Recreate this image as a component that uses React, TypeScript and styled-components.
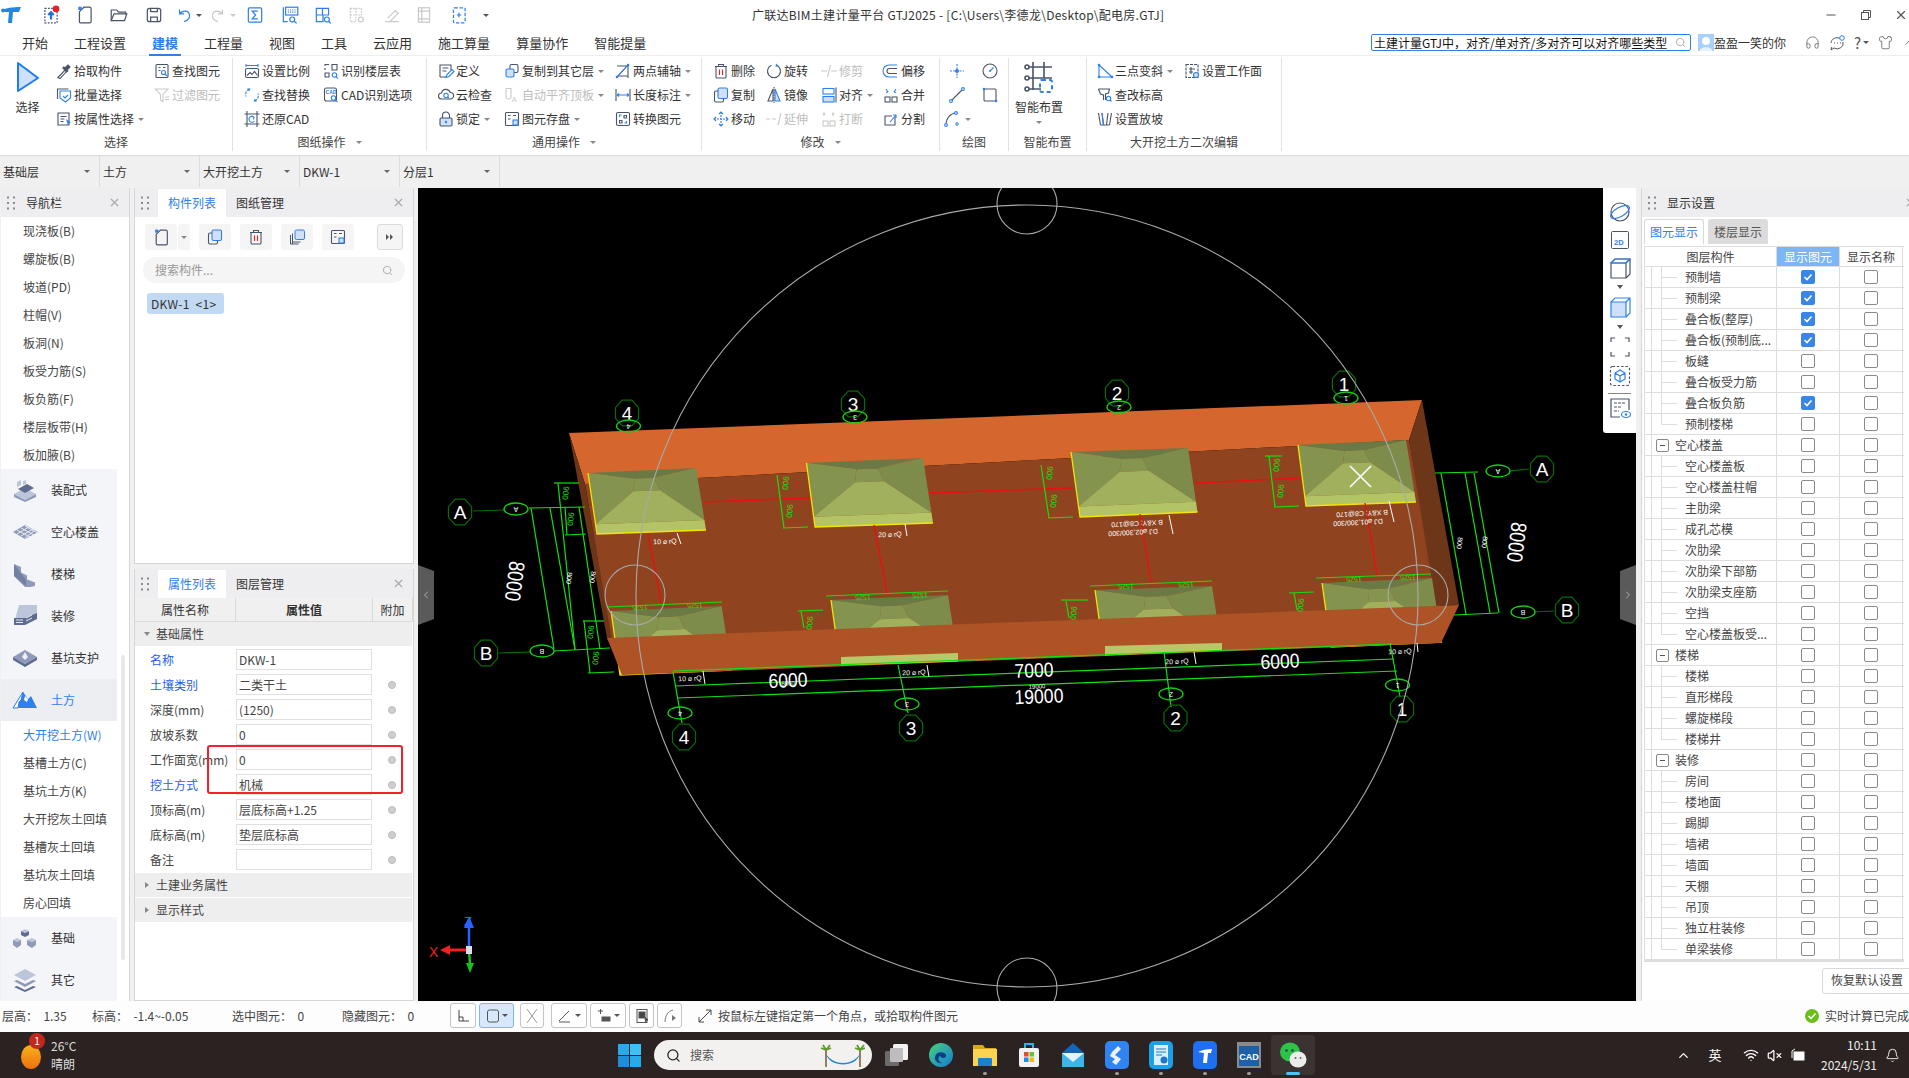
import React from 'react';
import styled, { createGlobalStyle } from 'styled-components';
import { X, Search, Headphones, Shirt, ChevronUp, ChevronLeft, ChevronRight, Wifi, VolumeX, Bell, Minus } from 'lucide-react';

const S = '#4a5468';
const B = '#2f80ed';
const D = '#c9c9c9';
const L = '#cfe1fa';

const Global = createGlobalStyle`
  html, body { margin: 0; padding: 0; background: #f0f0f0; overflow: hidden; }
  * { box-sizing: border-box; }
  body { font-family: "Noto Sans CJK SC", "Open Sans", sans-serif; font-size: 12px; color: #333; }
`;

const Shell = styled.div`
  width: 1909px; height: 1078px; display: flex; flex-direction: column; overflow: hidden; background: #f0f0f0;
`;
const TitleBar = styled.div`
  height: 30px; flex: none; display: flex; align-items: center; background: #fff;
`;
const Qat = styled.div`
  width: 752px; display: flex; align-items: center; flex: none;
`;
const QatCell = styled.span<{ $w: number; $pl?: number }>`
  width: ${p => p.$w}px; padding-left: ${p => p.$pl ?? 0}px; display: inline-flex; align-items: center; justify-content: center; flex: none;
`;
const TitleText = styled.div`
  font-size: 12px; line-height: 16px; color: #333; white-space: nowrap; letter-spacing: 0.28px;
`;
const WinControls = styled.div`
  margin-left: auto; display: flex; align-items: center; gap: 21px; padding-right: 1px;
`;
const TabBar = styled.div`
  height: 26px; flex: none; display: flex; align-items: stretch; background: #fff; padding-left: 22px; gap: 26px; border-bottom: 1px solid #eee;
`;
const MenuTab = styled.div<{ $active?: boolean }>`
  font-size: 13px; line-height: 24px; white-space: nowrap; position: relative; margin-top: 1px;
  color: ${p => (p.$active ? B : '#333')}; font-weight: ${p => (p.$active ? 700 : 400)};
  ${p => p.$active && `&::after { content: ''; position: absolute; left: -3px; right: -3px; bottom: -1px; height: 2px; background: ${B}; }`}
`;
const TabRight = styled.div`
  margin-left: auto; display: flex; align-items: center; height: 25px; width: 538px;
`;
const HelpSearch = styled.div`
  width: 320px; flex: none; height: 17px; border: 1px solid ${B}; border-radius: 2px; display: flex; align-items: center; justify-content: space-between; padding: 0 4px 0 2px;
  font-size: 12px; line-height: 15px; color: #111; white-space: nowrap; overflow: hidden;
`;
const UserName = styled.span`
  font-size: 12px; color: #333; white-space: nowrap; line-height: 16px; margin-right: 19px; flex: none;
`;
const HelpIcons = styled.div`
  display: flex; align-items: center; gap: 9px; flex: none;
`;
const QMark = styled.span`
  display: inline-flex; align-items: center; font-size: 15px; line-height: 16px; color: #555;
`;
const Ribbon = styled.div`
  height: 100px; flex: none; display: flex; background: #fff; padding: 2px 0 4px; border-bottom: 1px solid #dcdcdc;
`;
const RGroup = styled.div<{ $w: number; $noBorder?: boolean }>`
  width: ${p => p.$w}px; flex: none; display: flex; flex-direction: column; ${p => !p.$noBorder && 'border-right: 1px solid #e2e2e2;'}
`;
const RBody = styled.div<{ $pl?: number }>`
  height: 77px; padding-top: 1px; padding-left: ${p => p.$pl ?? 0}px; display: flex;
`;
const RLabel = styled.div`
  height: 18px; font-size: 12px; line-height: 18px; text-align: center; color: #444; display: flex; justify-content: center; align-items: center; gap: 6px;
`;
const RCol = styled.div<{ $w: number }>`
  width: ${p => p.$w}px; flex: none; display: flex; flex-direction: column;
`;
const RItem = styled.div<{ $off?: boolean; $center?: boolean }>`
  height: 24px; display: flex; align-items: center; white-space: nowrap; line-height: 16px; font-size: 12px;
  color: ${p => (p.$off ? '#bdbdbd' : '#333')}; ${p => p.$center && 'justify-content: center;'}
`;
const RText = styled.span`
  margin-left: 1px;
`;
const Caret = styled.span`
  display: inline-block; width: 0; height: 0; border-left: 3px solid transparent; border-right: 3px solid transparent; border-top: 3px solid #888; margin-left: 4px; flex: none;
`;
const Large = styled.div`
  display: flex; flex-direction: column; align-items: center; font-size: 12px; line-height: 16px; color: #333;
`;
const LargeIconBox = styled.div<{ $h: number }>`
  height: ${p => p.$h}px; display: flex; align-items: center; justify-content: center;
`;
const LargeText = styled.span`
  margin-top: 4px;
`;
const SelectBar = styled.div`
  height: 31px; flex: none; display: flex; background: #f0f0f0;
`;
const SelectBox = styled.div`
  width: 100px; border-right: 1px solid #dcdcdc; display: flex; align-items: center; justify-content: space-between; padding: 0 9px 0 3px; font-size: 12px; line-height: 16px; color: #333;
`;
const Main = styled.div`
  height: 814px; flex: none; display: flex; padding-top: 1px; background: #f0f0f0;
`;
const NavPanel = styled.div`
  width: 129px; margin-left: 1px; flex: none; background: #fff; border-right: 1px solid #d6d6d6; position: relative; display: flex; flex-direction: column;
`;
const PanelHead = styled.div`
  height: 29px; flex: none; display: flex; align-items: stretch; background: #eeeef0; font-size: 12px; line-height: 16px; color: #333;
`;
const Grip = styled.div<{ $w: number }>`
  width: ${p => p.$w}px; flex: none; display: flex; align-items: center; padding-left: 6px;
`;
const HeadTitle = styled.div`
  display: flex; align-items: center; white-space: nowrap;
`;
const HeadTab = styled.div<{ $active?: boolean }>`
  width: 68px; margin-top: 1px; display: flex; align-items: center; justify-content: center;
  background: ${p => (p.$active ? '#fff' : 'transparent')}; color: ${p => (p.$active ? B : '#333')};
`;
const HeadClose = styled.div<{ $edge?: boolean }>`
  margin-left: auto; display: flex; align-items: center; padding-right: ${p => (p.$edge ? 0 : 8)}px; color: #a8a8a8; ${p => p.$edge && 'margin-right: -6px;'}
`;
const NavItem = styled.div<{ $active?: boolean }>`
  height: 28px; flex: none; padding-left: 22px; display: flex; align-items: center; font-size: 12px; line-height: 16px; white-space: nowrap; color: ${p => (p.$active ? B : '#444')};
`;
const NavCat = styled.div<{ $active?: boolean }>`
  height: 42px; flex: none; width: 116px; padding-left: 11px; display: flex; align-items: center; gap: 13px; font-size: 12px; line-height: 16px;
  background: ${p => (p.$active ? '#eceef2' : '#f4f5f8')}; color: ${p => (p.$active ? B : '#333')};
`;
const NavScroll = styled.div`
  position: absolute; left: 120px; top: 467px; width: 4px; height: 305px; background: #e8e8e8; border-radius: 2px;
`;
const MidCol = styled.div`
  width: 280px; margin-left: 4px; flex: none; display: flex; flex-direction: column; gap: 5px;
`;
const Panel = styled.div<{ $h?: number }>`
  ${p => (p.$h ? `height: ${p.$h}px;` : 'flex: 1;')} flex-shrink: 0; background: #fff; border: 1px solid #d6d6d6; border-top: none; position: relative; display: flex; flex-direction: column;
`;
const ToolRow = styled.div`
  display: flex; padding: 7px 0 0 10px; height: 33px;
`;
const ToolBtn = styled.div<{ $w?: number; $ml?: number; $border?: boolean }>`
  width: ${p => p.$w ?? 32}px; height: 26px; margin-left: ${p => p.$ml ?? 0}px; background: #f5f5f5; border-radius: 3px; display: flex; align-items: center; justify-content: center;
  ${p => p.$border && 'border: 1px solid #dcdcdc; background: #f5f5f5;'}
`;
const CompSearch = styled.div`
  margin: 7px 8px 0 8px; height: 26px; border-radius: 13px; background: #f5f5f5; display: flex; align-items: center; justify-content: space-between; padding: 0 12px; color: #999; font-size: 12px; line-height: 16px;
`;
const CompItem = styled.div`
  margin: 10px 0 0 12px; width: 77px; height: 21px; background: #c1d9f2; border-radius: 3px; font-size: 12px; line-height: 21px; padding-left: 4px; color: #333; white-space: pre; letter-spacing: 0.3px;
`;
const PropGrid = styled.div<{ $head?: boolean }>`
  display: grid; grid-template-columns: 101px 137px 1fr; ${p => p.$head && 'height: 24px; background: #f0f0f0; border-bottom: 1px solid #dcdcdc;'}
`;
const PropHeadCell = styled.div<{ $bold?: boolean }>`
  display: flex; align-items: center; justify-content: center; border-right: 1px solid #d8d8d8; font-size: 12px; line-height: 16px; font-weight: ${p => (p.$bold ? 700 : 400)};
`;
const PropGroup = styled.div<{ $mt?: number }>`
  height: 24px; margin-top: ${p => p.$mt ?? 0}px; margin-bottom: 1px; margin-right: 1px; background: #eeeeee; display: flex; align-items: center; padding-left: 9px; gap: 6px; font-size: 12px; line-height: 16px; color: #444;
`;
const Tri = styled.span<{ $open?: boolean }>`
  width: 0; height: 0; flex: none; display: inline-block;
  ${p => (p.$open
    ? 'border-left: 3px solid transparent; border-right: 3px solid transparent; border-top: 4px solid #888;'
    : 'border-top: 3px solid transparent; border-bottom: 3px solid transparent; border-left: 4px solid #888; margin-left: 1px; margin-right: 1px;')}
`;
const PropRow = styled.div`
  height: 25px; display: grid; grid-template-columns: 101px 136px 1fr; align-items: center;
`;
const PropName = styled.div<{ $link?: boolean }>`
  padding-left: 15px; font-size: 12px; line-height: 16px; white-space: nowrap; color: ${p => (p.$link ? '#1f5fe8' : '#444')};
`;
const PropInput = styled.div`
  height: 21px; border: 1px solid #e0e0e0; padding-left: 2px; font-size: 12px; line-height: 19px; color: #444; white-space: nowrap;
`;
const PropDot = styled.span`
  justify-self: center; width: 8px; height: 8px; border-radius: 50%; background: #cfcfcf; border: 1px solid #bbb; margin-right: 1px;
`;
const Annotation = styled.div`
  position: absolute; left: 72px; top: 176px; width: 196px; height: 49px; border: 2px solid #f0232a; border-radius: 3px; pointer-events: none;
`;
const CanvasWrap = styled.div`
  width: 1218px; margin-left: 4px; flex: none; background: #000; position: relative; overflow: hidden;
`;
const CanvasSvg = styled.svg`
  display: block; width: 1218px; height: 813px;
`;
const SideHandle = styled.div<{ $side: 'l' | 'r' }>`
  position: absolute; top: 377px; height: 60px; width: 16px; background: #5a5a5a; color: #aaa; display: flex; align-items: center; justify-content: center;
  ${p => (p.$side === 'l'
    ? 'left: 0; clip-path: polygon(0 0, 100% 10%, 100% 90%, 0 100%);'
    : 'right: 0; clip-path: polygon(0 10%, 100% 0, 100% 100%, 0 90%);')}
`;
const ViewBar = styled.div`
  position: absolute; right: 0; top: 0; width: 33px; height: 245px; padding-top: 10px; background: #fff; border-radius: 0 0 0 3px; display: flex; flex-direction: column; align-items: center;
`;
const ViewIcon = styled.div<{ $h: number }>`
  height: ${p => p.$h}px; flex: none; display: flex; align-items: center; justify-content: center;
`;
const ViewRule = styled.div`
  width: 23px; height: 1px; background: #888; margin: 3px 0 1px; flex: none;
`;
const RightPanel = styled.div`
  width: 270px; margin-left: 5px; flex: none; background: #fff; border-left: 1px solid #d6d6d6; display: flex; flex-direction: column;
`;
const RightTabs = styled.div`
  display: flex; gap: 4px; padding: 2px 0 0 2px; height: 29px;
`;
const RightTab = styled.div<{ $active?: boolean }>`
  width: 60px; height: 25px; border-radius: 3px 3px 0 0; display: flex; align-items: center; justify-content: center; font-size: 12px; line-height: 16px;
  ${p => (p.$active ? `background: #fff; color: ${B}; border: 1px solid #d8d8d8; border-bottom: none;` : 'background: #dcdcdc; color: #555;')}
`;
const DisplayTable = styled.div`
  width: 260px; margin-left: 2px; border: 1px solid #ddd; border-width: 1px 0 2px 1px;
`;
const DRow = styled.div<{ $head?: boolean }>`
  height: ${p => (p.$head ? 20 : 21)}px; display: grid; grid-template-columns: ${p => (p.$head ? '132px' : '7px 125px')} 63px 63px; border-bottom: 1px solid #ddd;
`;
const DIndent = styled.div`
  border-right: 1px solid #ddd;
`;
const DTree = styled.div`
  border-right: 1px solid #ddd; display: flex; align-items: center; font-size: 12px; line-height: 16px; color: #444; white-space: nowrap; overflow: hidden;
`;
const DHeadCell = styled.div<{ $on?: boolean }>`
  display: flex; align-items: center; justify-content: center; border-right: 1px solid #ddd; font-size: 12px; line-height: 16px; color: ${p => (p.$on ? '#fff' : '#444')}; background: ${p => (p.$on ? '#7ab6f8' : '#fff')};
`;
const DCell = styled.div`
  display: flex; align-items: center; justify-content: center; border-right: 1px solid #ddd;
`;
const Connector = styled.span<{ $last?: boolean }>`
  width: 16px; height: 100%; flex: none; margin-left: 9px; margin-right: 8px;
  background:
    linear-gradient(#ddd, #ddd) 0 0 / 1px ${p => (p.$last ? '50%' : '100%')} no-repeat,
    linear-gradient(#ddd, #ddd) 0 50% / 100% 1px no-repeat;
`;
const Expander = styled.span`
  width: 13px; height: 13px; border: 1px solid #888; border-radius: 2px; margin: 0 6px 0 4px; flex: none; display: inline-flex; align-items: center; justify-content: center;
  &::before { content: ''; width: 5px; height: 1px; background: #555; display: block; }
`;
const Check = styled.span<{ $on?: boolean }>`
  width: 14px; height: 14px; border-radius: 2px; display: flex; align-items: center; justify-content: center;
  ${p => (p.$on ? 'background: #3a85e8; border: 1px solid #3a85e8;' : 'background: #fff; border: 1px solid #8a8a8a;')}
`;
const RestoreRow = styled.div`
  padding: 6px 0 0 180px;
`;
const RestoreBtn = styled.div`
  width: 100px; height: 26px; border: 1px solid #d8d8d8; border-radius: 3px; padding-left: 8px; font-size: 12px; line-height: 22px; color: #444; white-space: nowrap; overflow: hidden;
`;
const StatusBar = styled.div`
  height: 31px; flex: none; background: #fdfdfd; display: flex; align-items: center; padding: 0 0 2px 2px; font-size: 12px; line-height: 16px; color: #444; white-space: nowrap;
`;
const StatItem = styled.span<{ $w: number }>`
  width: ${p => p.$w}px; flex: none; white-space: pre;
`;
const SBtn = styled.div<{ $w: number; $ml?: number; $on?: boolean }>`
  width: ${p => p.$w}px; height: 25px; margin-left: ${p => p.$ml ?? 3}px; border-radius: 3px; flex: none; display: flex; align-items: center; justify-content: center; gap: 2px;
  border: 1px solid ${p => (p.$on ? '#7ab6f8' : '#c4c4c4')}; background: ${p => (p.$on ? '#d7e8fc' : '#fff')};
`;
const StatusHint = styled.div`
  margin-left: 15px; display: flex; align-items: center; gap: 5px;
`;
const StatusDone = styled.div`
  margin-left: auto; display: flex; align-items: center; gap: 6px;
`;
const Taskbar = styled.div`
  height: 46px; flex: none; background: #2b2321; display: flex; align-items: center; color: #fff; font-size: 12px;
`;
const Weather = styled.div`
  width: 607px; flex: none; padding-left: 21px; display: flex; align-items: center; gap: 10px;
`;
const WeatherIcon = styled.div`
  position: relative; width: 20px; height: 28px; flex: none;
`;
const WBadge = styled.span`
  position: absolute; left: 8px; top: -8px; width: 16px; height: 16px; border-radius: 50%; background: #c3281f; color: #fff; font-size: 10px; line-height: 16px; text-align: center;
`;
const WeatherText = styled.div`
  font-size: 12px; line-height: 18px; color: #ddd;
`;
const TaskCell = styled.div<{ $on?: boolean }>`
  width: 44px; height: 40px; flex: none; display: flex; flex-direction: column; align-items: center; justify-content: center; position: relative; border-radius: 4px;
  ${p => p.$on && 'background: #3a3331;'}
`;
const TaskDot = styled.span<{ $on?: boolean }>`
  position: absolute; bottom: 0; left: 50%; transform: translateX(-50%); height: 3px; border-radius: 2px; width: ${p => (p.$on ? 14 : 4)}px; background: ${p => (p.$on ? '#4cc2ff' : '#9a9a9a')};
`;
const WinSearch = styled.div`
  width: 218px; height: 30px; margin: 0 3px; border-radius: 15px; background: #f3f1f0; color: #555; flex: none; display: flex; align-items: center; padding: 0 6px 0 12px; font-size: 12px; line-height: 16px; gap: 9px;
`;
const Tray = styled.div`
  margin-left: auto; display: flex; align-items: center; padding-right: 9px;
`;
const TrayCell = styled.span<{ $w: number; $ml?: number }>`
  width: ${p => p.$w}px; margin-left: ${p => p.$ml ?? 0}px; display: inline-flex; justify-content: center; align-items: center; flex: none; font-size: 13px; line-height: 16px;
`;
const Clock = styled.div`
  text-align: right; font-size: 12px; line-height: 20px; margin-right: 8px; width: 66px; color: #eee;
`;

/* ------- icons ------- */
const Ic: React.FC<{ n: string; s?: number; off?: boolean }> = ({ n, s = 18, off }) => (
  <svg width={s} height={s} viewBox="0 0 18 18" fill="none" stroke={off ? D : S} strokeWidth={1.1} style={{ flex: 'none' }}>
    {ICONS[n]}
  </svg>
);
const ICONS: Record<string, React.ReactNode> = {
  save: <><rect x="3" y="3" width="12" height="12" rx="2" /><path d="M6 15v-4h6v4M6 3v3h6V3" /></>,
  doc: <><path d="M4 6 L8 2 H13 a1.5 1.5 0 0 1 1.5 1.5 V15 a1 1 0 0 1 -1 1 H5 a1 1 0 0 1 -1 -1Z" /><rect x="3" y="1.5" width="3" height="3" fill={B} stroke="none" /></>,
  folder: <><path d="M2 14V4.5h5l1.5 2H15v1.5" /><path d="M2 14l2.5-6H16l-2 6Z" /></>,
  upload: <><rect x="3.5" y="3" width="11" height="13" strokeDasharray="1.6 1.2" /><path d="M9 13V7M6.5 9L9 6.5 11.5 9" stroke="#1e6fd9" strokeWidth="2" /><circle cx="13.5" cy="3.5" r="3" fill="#e8202a" stroke="none" /></>,
  undo: <><path d="M5 4v4h4M5 8c2-3 8-4 9 1 .5 3-2 5-5 6" stroke={B} /></>,
  redo: <><path d="M13 4v4H9M13 8c-2-3-8-4-9 1-.5 3 2 5 5 6" stroke={D} /></>,
  sum: <><rect x="3" y="2.5" width="12" height="13" rx="1" stroke={B} /><path d="M11.5 5.5h-5l3 3.5-3 3.5h5" stroke={B} /></>,
  calc: <><path d="M3 2v13h4" stroke={B} /><rect x="5" y="2" width="11" height="7" stroke={B} /><path d="M7 4.5h7M7 6.5h7" stroke={B} strokeDasharray="1 1" /><circle cx="11" cy="13" r="2.2" stroke={B} /><path d="M12.6 14.6L15 16.5" stroke={B} /></>,
  grid: <><path d="M3 3h11v6H9v6H3ZM3 9h6M8.5 3v6" stroke={B} /><circle cx="12.5" cy="13" r="2.2" stroke={B} /><path d="M14 14.6l2 2" stroke={B} /></>,
  gridOff: <><path d="M3 3h10v6H8v6H3ZM3 9h5M8 3v6" strokeDasharray="1.5 1" /><circle cx="12.5" cy="13" r="2.2" /></>,
  penOff: <><path d="M3 15h12M5 12l7-7 2.5 2.5-7 7" /></>,
  film: <><rect x="4" y="2.5" width="10" height="13" /><path d="M4 5.5h10M4 12.5h10M7 2.5v13" /></>,
  frame: <><path d="M5 2.5h8.5a1 1 0 0 1 1 1V15a1 1 0 0 1-1 1H5a1 1 0 0 1-1-1V3.5a1 1 0 0 1 1-1Z" stroke={B} strokeDasharray="3 1.5" /><path d="M7 9h4M9 7v4" stroke={B} /></>,
  pick: <><path d="M3 15.5L10 8l1.5 1.5L5 16.5Z" fill="#fff" /><path d="M10 6l3-3 2 2-3 3 .8 1-1 1-4-4 1-1Z" fill={S} /></>,
  batch: <><path d="M2.5 13V3h11" /><path d="M5 5h10.5v7L10.5 16 5 12Z" stroke={B} /><path d="M8 10l2 2 3-3" stroke={B} /></>,
  attr: <><path d="M3 3h11v12H3Z" /><path d="M5.5 6.5h6M5.5 9h4M5.5 11.5h3" /><path d="M11 9l5 3.5-2.3.5-.8 2.2Z" fill={B} stroke="none" /></>,
  find: <><rect x="3" y="2.5" width="12" height="13" rx="1" /><path d="M5.5 5.5h2M5.5 8.5h2M10 5.5h2.5" /><circle cx="10.5" cy="10.5" r="2" stroke={B} /><path d="M12 12l2 2" stroke={B} /></>,
  filter: <><path d="M2.5 3H15l-5 5.5v7L7.5 14V8.5Z" /><path d="M12 11h4M12 13.5h4" /></>,
  scale: <><path d="M3 2v3M15 2v3M3 3.5h12" stroke={B} /><rect x="2.5" y="6.5" width="13" height="9" rx="1.5" /><path d="M4 13.5l3-3 2 2 2.5-3 3 4" /></>,
  recog: <><path d="M3 4V2.5h4M3 8V6M3 13V11h4v4H3ZM10 2.5h5V8h-5Z" /><circle cx="12.5" cy="13" r="2.2" stroke={B} /><path d="M14 14.6l2 2" stroke={B} /></>,
  replace: <><path d="M6.5 3C3.5 4 2 7 3 10.5M11.5 15c3-1 4.5-4 3.5-7.5" stroke={B} strokeDasharray="2.8 1.2" /><path d="M6 5.5L7.5 2.5 4.2 2.5Z" fill={B} stroke="none" /><path d="M12 12.5L10.5 15.5 13.8 15.5Z" fill={B} stroke="none" /></>,
  cad: <><rect x="2.5" y="2" width="12" height="13" rx="2" /><text x="3.6" y="8" fontSize="5" fontFamily="Liberation Sans" fontWeight="700" fill={B} stroke="none">CAD</text><circle cx="11.5" cy="12" r="2.2" stroke={B} /><path d="M13 13.6l2.5 2.5" stroke={B} /></>,
  restore: <><path d="M1.5 4h15M1.5 14h15M4 1v16M14 1v16" /><path d="M11 7a3 3 0 1 0 .4 4M11 7l-2.5-.5M11 7l-.5 2.5" stroke={B} /></>,
  define: <><path d="M3 15V3h11v5M3 15h7" /><path d="M5.5 6h6M5.5 9h4" /><path d="M9 15.5l1-3 5-5 2 2-5 5Z" stroke={B} /></>,
  cloud: <><path d="M4.5 13a3 3 0 0 1 0-6 4.5 4.5 0 0 1 8.7-.5 3.2 3.2 0 0 1 .3 6.5Z" /><circle cx="9" cy="9.5" r="2.2" stroke={B} /><path d="M10.5 11l1.5 1.5" stroke={B} /></>,
  lock: <><rect x="3" y="8" width="12" height="8" rx="1.2" fill={L} /><path d="M5.5 8V5.5a3.5 3.5 0 0 1 7 0V8" /><circle cx="9" cy="12" r="1.2" fill={B} stroke="none" /></>,
  copyf: <><rect x="7" y="2.5" width="8" height="8" rx="1.5" /><rect x="3" y="7" width="8" height="8" rx="1.5" fill={L} stroke={B} /></>,
  autoalign: <><path d="M3 2.5v9M3 2.5h5v9M3 11.5c1 2 4 2 5 0" /><text x="8.8" y="16" fontSize="7.5" fontFamily="Liberation Sans" fill={D} stroke="none">A</text></>,
  store: <><rect x="2.5" y="2.5" width="13" height="13" rx="1" /><path d="M5 5.5h2.5M10 5.5h3M5 9h2.5" /><rect x="10" y="10" width="5" height="5" fill={L} stroke={B} /></>,
  twoaxis: <><path d="M3 4h11M3 14h11M14 2v14M3 15L14 3" stroke={S} /><path d="M3 15L14 3" stroke={B} /><circle cx="3" cy="15" r="1.3" fill={B} stroke="none" /><circle cx="14" cy="3" r="1.3" fill={B} stroke="none" /></>,
  lenDim: <><path d="M2 3v12M16 3v12" /><path d="M3 9h12M3 9l2-1.5M3 9l2 1.5M15 9l-2-1.5M15 9l-2 1.5" stroke={B} /></>,
  convert: <><rect x="2.5" y="2.5" width="13" height="13" rx="1.5" /><path d="M5.5 7V5h2M12.5 11v2h-2" stroke={B} /><path d="M10 5.5h2.5V8h-2.5ZM5.5 10.5H8V13H5.5Z" /></>,
  del: <><path d="M3 4.5h12M6.5 4.5V2.5h5v2M4 4.5v10.5a1 1 0 0 0 1 1h8a1 1 0 0 0 1-1V4.5" /><path d="M7.5 7.5v5.5M10.5 7.5v5.5" stroke="#e02020" /></>,
  rotate: <><path d="M11.5 3.2A6.5 6.5 0 1 1 6.5 3.2" /><path d="M11 1.5l2.5 2.2-3 1.3Z" fill={B} stroke="none" /></>,
  trim: <><path d="M1 9h6M11 9h6M10.5 3L7.5 15" /></>,
  offset: <><path d="M15 3H7a6 6 0 0 0 0 12h8" stroke={B} /><path d="M15 6.5H7.5a2.5 2.5 0 0 0 0 5H15" /></>,
  copy: <><rect x="6" y="2" width="9.5" height="10.5" rx="1.5" fill={L} stroke={B} /><path d="M6 5H4a1.5 1.5 0 0 0-1.5 1.5v8a1.5 1.5 0 0 0 1.5 1.5h6a1.5 1.5 0 0 0 1.5-1.5v-2" /></>,
  mirror: <><path d="M8 3L3 15h5Z" /><path d="M10 3l5 12h-5Z" fill={L} stroke={B} /><path d="M9 1v16" strokeDasharray="1.5 1" /></>,
  align: <><rect x="3" y="2.5" width="11" height="5.5" stroke={B} /><rect x="3" y="10.5" width="11" height="5.5" fill={L} stroke={B} /><path d="M16 1.5v15" /></>,
  merge: <><rect x="3" y="11" width="5" height="5" /><rect x="10" y="11" width="5" height="5" /><path d="M4 3l2 3M14 3l-2 3M6 6l-2 .5M12 6l2 .5" stroke={B} /></>,
  move: <><path d="M9 2v14M2 9h14" stroke={B} strokeDasharray="2 1" /><path d="M7 4l2-2 2 2M7 14l2 2 2-2M4 7L2 9l2 2M14 7l2 2-2 2" stroke={B} /></>,
  extend: <><path d="M1 9h4M7 9h4M16 3l-3 12" /></>,
  brk: <><rect x="3" y="11" width="5" height="5" /><rect x="10" y="11" width="5" height="5" /><path d="M4 3v3M3 4.5l1-1.5 1 1.5M13 3v3M12 4.5l1-1.5 1 1.5" /></>,
  split: <><path d="M13 7v8H3V6h7" /><path d="M8 12l6-7M11 5h3v3" stroke={B} /></>,
  point: <><path d="M9 2v14M2 9h14" stroke={B} strokeDasharray="2 1.2" /><circle cx="9" cy="9" r="2" fill={B} stroke="none" /></>,
  circle: <><circle cx="9" cy="9" r="7" /><path d="M9 9l3.5-3.5" stroke={B} /><circle cx="9" cy="9" r="1" fill={B} stroke="none" /></>,
  line: <><path d="M3 15L15 3" /><circle cx="3" cy="15" r="1.4" fill="#fff" stroke={B} /><circle cx="15" cy="3" r="1.4" fill="#fff" stroke={B} /></>,
  rect: <><rect x="3" y="3" width="12" height="12" rx="1" /><circle cx="3" cy="3" r="1.3" fill={B} stroke="none" /><circle cx="15" cy="15" r="1.3" fill={B} stroke="none" /></>,
  arc: <><path d="M3 15C3 8 8 3 13 3" /><circle cx="3" cy="15" r="1.4" fill="#fff" stroke={B} /><circle cx="13" cy="3" r="1.4" fill="#fff" stroke={B} /><circle cx="14" cy="14" r="1.2" fill="#fff" stroke={B} /></>,
  tri: <><path d="M3 3v12h13M3 3l13 12" stroke={B} /><circle cx="3" cy="3" r="1.3" fill={B} stroke="none" /><circle cx="3" cy="15" r="1.3" fill={B} stroke="none" /><circle cx="16" cy="15" r="1.3" fill={B} stroke="none" /></>,
  work: <><rect x="3" y="2.5" width="12" height="13" strokeDasharray="3 1" /><path d="M6 7h6M6 10h4M8 5v7" /><circle cx="13" cy="13" r="2.5" fill={L} stroke={B} /></>,
  elev: <><path d="M2.5 3h11l-1 4-3 1v6" /><path d="M2.5 3l2 5 3 1v5" /><circle cx="12.5" cy="12.5" r="2.2" stroke={B} /><path d="M14 14l1.5 1.5" stroke={B} /></>,
  slope: <><path d="M2.5 3l2 12M15.5 3l-2 12M6 3l1.5 12M12 3l-1.5 12M4.5 15h9" stroke={S} /><path d="M6 3l1.5 12" stroke={B} /></>,
};
const Check2 = () => (
  <svg width="10" height="10" viewBox="0 0 10 10" fill="none" stroke="#fff" strokeWidth="1.6"><path d="M1.5 5l2.5 2.5 4.5-5" /></svg>
);
const GripDots = () => (
  <svg width="8" height="14" viewBox="0 0 8 14" fill="#8a8a8a">
    {[1, 7].map(x => [1.5, 7, 12.5].map(y => <rect key={`${x}${y}`} x={x - 1} y={y - 1} width="2" height="2" />))}
  </svg>
);

const Row: React.FC<{ n: string; t: string; off?: boolean; caret?: boolean }> = ({ n, t, off, caret }) => (
  <RItem $off={off}>
    <Ic n={n} off={off} /><RText>{t}</RText>{caret && <Caret />}
  </RItem>
);

const Logo = () => (
  <svg width="24" height="20" viewBox="0 0 24 20"><path d="M2 5C6 3 12 2 21 2L19 7h-6l-1 11H8L9 7H5Z" fill="#1e88e5" /><circle cx="3" cy="5.5" r="2" fill="#1e88e5" /></svg>
);

const QatCaret = styled.span<{ $off?: boolean }>`
  width: 0; height: 0; border-left: 3px solid transparent; border-right: 3px solid transparent; border-top: 3px solid ${p => (p.$off ? '#ccc' : '#555')};
`;

/* Nav category icons */
const N1 = '#8e9ab8';
const N2 = '#5f6b8e';
const N3 = '#bcc5d9';
const NavIcons: Record<string, React.ReactNode> = {
  装配式: <><path d="M2 17l11-6 11 6-11 6Z" fill={N3} /><path d="M2 17v3l11 5v-2ZM13 23v2l11-5v-3Z" fill={N1} /><path d="M6 12l9-5 7 4-9 5Z" fill={N2} /><path d="M5 5l4-2v5l-4 2ZM11 4l3-1v4l-3 1Z" fill={N3} /></>,
  空心楼盖: <><path d="M1 13l12-7 13 7-13 7Z" fill={N1} /><g stroke="#e8ebf3" strokeWidth="1"><path d="M5 11l13 7M9 9l13 7M13 7l13 7M5 15l12-7M9 17l12-7M13 19l9-7" /></g></>,
  楼梯: <><path d="M2 3l7 3v5l6 3v4l8 3v4l-9 2L2 15Z" fill={N1} /><path d="M2 3v12l12 10v-6Z" fill={N2} opacity=".55" /><path d="M9 6l7 4M9 11l6 3M15 14l8 4M15 18l8 3" stroke="#eef0f6" /></>,
  装修: <><path d="M7 2h18v13l-12 5H2Z" fill={N3} /><path d="M2 15h11l12-5v6l-12 6H2Z" fill={N2} /><path d="M4 17h7M14 15l6-3M4 19.5h7M14 18l6-3" stroke="#e8ebf3" /></>,
  基坑支护: <><path d="M1 12l12-7 12 7-12 7Z" fill={N1} /><path d="M1 12v3l12 7v-3ZM13 19v3l12-7v-3Z" fill={N2} /><path d="M13 7l3 5-3 3-3-3Z" fill="#eef0f6" /></>,
  土方: <><path d="M1 21L11 5l5 7 3-3 6 12Z" fill={B} /><path d="M1 21L11 5l-2 8-2 2-1 6Z" fill="#fff" stroke={B} /><path d="M13 9l-1 4 3 2 1-3Z" fill="#fff" /></>,
  基础: <><path d="M9 6l4-2 4 2-4 2Z" fill={N3} /><path d="M9 6v4l4 2V8ZM17 6v4l-4 2V8Z" fill={N2} /><path d="M1 15l4-2 4 2-4 2Z" fill={N3} /><path d="M1 15v5l4 3v-6ZM9 15v5l-4 3v-6Z" fill={N1} /><path d="M15 15l5-2 4 2-4 2Z" fill={N3} /><path d="M15 15v5l5 3v-6ZM24 15v5l-4 3v-6Z" fill={N1} /></>,
  其它: <><path d="M2 8l11-6 11 6-11 6Z" fill={N3} /><path d="M2 14l3-1 8 4 8-4 3 1-11 6Z" fill={N1} /><path d="M2 20l3-1 8 4 8-4 3 1-11 5Z" fill={N2} /></>,
};
const NavCatRow: React.FC<{ t: string; active?: boolean }> = ({ t, active }) => (
  <NavCat $active={active}>
    <svg width="26" height="26" viewBox="0 0 26 26" style={{ flex: 'none' }}>{NavIcons[t]}</svg>{t}
  </NavCat>
);

/* Drawing helpers */
type P = [number, number];
const pts = (a: P[]) => a.map(p => p.join(',')).join(' ');
const bil = (c: P[], u: number, v: number): P => {
  const [a, b, d, e] = c;
  const x = (1 - v) * ((1 - u) * a[0] + u * b[0]) + v * ((1 - u) * e[0] + u * d[0]);
  const y = (1 - v) * ((1 - u) * a[1] + u * b[1]) + v * ((1 - u) * e[1] + u * d[1]);
  return [x, y];
};
const Footing: React.FC<{ c: P[] }> = ({ c }) => {
  const q = (u: number, v: number) => bil(c, u, v);
  const tl = q(0, 0), tr = q(1, 0), br = q(1, 0.84), bl = q(0, 0.84);
  const a = q(0.42, 0.13), b = q(0.6, 0.13), d = q(0.64, 0.33), e = q(0.39, 0.33);
  return (
    <g>
      <polygon points={pts([tl, tr, b, a])} fill="#6b7944" />
      <polygon points={pts([tl, a, e, bl])} fill="#84944f" />
      <polygon points={pts([tr, br, d, b])} fill="#7e8c4b" />
      <polygon points={pts([a, b, d, e])} fill="#85954f" />
      <polygon points={pts([e, d, br, bl])} fill="#a0b05c" />
      <polygon points={pts([bl, br, c[2], c[3]])} fill="#b2c465" />
      <polyline points={pts([tl, c[3], c[2]])} fill="none" stroke="#f6e300" strokeWidth="1.3" />
    </g>
  );
};
const front = (tl: P, tr: P): P[] => [tl, tr, [tr[0] + 10, tr[1] + 64], [tl[0] + 9, tl[1] + 64]];

const GREEN: number[][] = [
  [554, 483, 579, 483], [558, 483, 575, 649], [565, 507, 567, 535], [565, 535, 586, 534],
  [531, 508, 554, 649], [550, 508, 575, 650], [579, 507, 600, 649], [529, 508, 585, 507],
  [554, 651, 610, 648], [583, 621, 604, 621], [584, 621, 590, 673], [588, 673, 614, 672],
  [777, 475, 784, 528], [783, 528, 808, 527], [607, 607, 722, 602], [826, 596, 948, 591],
  [798, 611, 823, 610], [801, 611, 804, 628], [1041, 465, 1049, 518], [1048, 518, 1073, 517],
  [1265, 456, 1282, 456], [1269, 456, 1275, 507], [1274, 507, 1299, 506], [1090, 586, 1212, 581],
  [1061, 600, 1088, 600], [1066, 601, 1069, 618], [1316, 578, 1431, 574], [1289, 593, 1314, 592],
  [1294, 593, 1297, 610], [1435, 473, 1478, 472], [1441, 473, 1466, 614], [1465, 473, 1490, 613],
  [1474, 473, 1499, 613], [1454, 615, 1498, 613], [675, 686, 1394, 659], [677, 698, 1397, 671],
  [673, 672, 682, 723], [898, 665, 908, 713], [1164, 652, 1171, 707], [1390, 643, 1400, 697],
  [673, 671, 1392, 644],
];
const DARK: number[][] = [
  [473, 511, 505, 510], [499, 653, 530, 652], [1509, 471, 1529, 469], [1534, 612, 1554, 611],
];
const RED: number[][] = [
  [704, 502, 810, 498], [929, 493, 1072, 488], [1195, 483, 1300, 478],
  [648, 533, 661, 603], [874, 525, 887, 593], [1140, 514, 1151, 582], [1365, 503, 1377, 575],
];
const Bubble: React.FC<{ x: number; y: number; t: string }> = ({ x, y, t }) => {
  const r = 12.5;
  const hex = Array.from({ length: 8 }, (_, i) => [x + r * Math.cos(Math.PI / 8 + (i * Math.PI) / 4), y + r * 1.12 * Math.sin(Math.PI / 8 + (i * Math.PI) / 4)] as P);
  return (
    <g>
      <polygon points={pts(hex)} fill="none" stroke="#086b08" strokeWidth="1.2" />
      <text x={x} y={y + 7} fontSize="19" fontFamily="Liberation Sans" fill="#fff" textAnchor="middle">{t}</text>
    </g>
  );
};
const Ell: React.FC<{ x: number; y: number; t: string }> = ({ x, y, t }) => (
  <g>
    <ellipse cx={x} cy={y} rx="12" ry="6" fill="none" stroke="#12d012" strokeWidth="1.3" />
    <text x={x} y={y + 2.5} fontSize="7" fontFamily="Liberation Sans" fill="#fff" textAnchor="middle" transform={`rotate(180 ${x} ${y})`}>{t}</text>
  </g>
);
const Dim: React.FC<{ x: number; y: number; t: string; r?: number; s?: number; w?: number; c?: string }> = ({ x, y, t, r = -2.4, s = 20, w, c = '#fff' }) => (
  <text x={x} y={y} fontSize={s} fontFamily="Liberation Sans" fill={c} textAnchor="middle" dominantBaseline="middle" textLength={w} lengthAdjust={w ? 'spacingAndGlyphs' : undefined} transform={`rotate(${r} ${x} ${y})`}>{t}</text>
);

const Drawing = () => (
  <CanvasSvg viewBox="418 188 1218 813">
    <polygon points="569,433 1422,400 1409,440 585,484" fill="#d5662e" />
    <polygon points="585,484 1409,440 1440,606 611,640" fill="#8f441f" />
    <polygon points="569,433 585,484 612,640 607,638" fill="#6c3518" />
    <polygon points="1422,400 1409,440 1436,606 1459,605" fill="#6e3618" />
    <Footing c={[[588, 473], [696, 468], [706, 530], [597, 534]]} />
    <Footing c={[[806.5, 463], [923, 458], [933, 523], [815, 527]]} />
    <Footing c={[[1071, 452], [1188, 448], [1197.5, 512], [1080, 517]]} />
    <Footing c={[[1298, 445], [1406, 440], [1416, 502], [1306, 506]]} />
    <Footing c={front([611, 611], [721.6, 606])} />
    <Footing c={front([831, 600], [948, 595])} />
    <Footing c={front([1095, 590], [1212, 586])} />
    <Footing c={front([1322, 583], [1432, 578])} />
    <polygon points="607,638 1459,605 1441,643 622,675" fill="#ad5326" />
    <polygon points="841,657 958,653 958,661 841,665" fill="#b8c868" />
    <polygon points="1105,646 1222,643 1222,650 1105,655" fill="#b8c868" />
    <path d="M841,665 L958,661 M1105,655 L1222,650" stroke="#f6e300" strokeWidth="1" />
    <g stroke="#e81010" strokeWidth="1.4">
      {RED.map((l, i) => <line key={i} x1={l[0]} y1={l[1]} x2={l[2]} y2={l[3]} />)}
    </g>
    <g stroke="#13e013" strokeWidth="1.2">
      {GREEN.map((l, i) => <line key={i} x1={l[0]} y1={l[1]} x2={l[2]} y2={l[3]} />)}
    </g>
    <g stroke="#086b08" strokeWidth="1.2">
      {DARK.map((l, i) => <line key={i} x1={l[0]} y1={l[1]} x2={l[2]} y2={l[3]} />)}
    </g>
    <Bubble x={627} y={413} t="4" /><Ell x={628.5} y={426} t="4" />
    <Bubble x={853} y={404} t="3" /><Ell x={855} y={417} t="3" />
    <Bubble x={1117} y={393} t="2" /><Ell x={1119} y={407} t="2" />
    <Bubble x={1344} y={384} t="1" /><Ell x={1346} y={398} t="1" />
    <Bubble x={684} y={737} t="4" /><Ell x={680} y={713} t="4" />
    <Bubble x={911} y={728} t="3" /><Ell x={907} y={704} t="3" />
    <Bubble x={1175.5} y={718} t="2" /><Ell x={1171} y={694} t="2" />
    <Bubble x={1402} y={709} t="1" /><Ell x={1397.5} y={685} t="1" />
    <Bubble x={460} y={512} t="A" /><Ell x={516} y={509} t="A" />
    <Bubble x={486} y={653} t="B" /><Ell x={542} y={651} t="B" />
    <Bubble x={1542} y={469} t="A" /><Ell x={1498} y={471} t="A" />
    <Bubble x={1567} y={610} t="B" /><Ell x={1523} y={612} t="B" />
    <Dim x={513} y={581} t="8000" r={97} s={22} w={40} />
    <Dim x={1515} y={542} t="8000" r={97} s={22} w={40} />
    <Dim x={788} y={682} t="6000" w={39} />
    <Dim x={1034} y={672} t="7000" w={39} />
    <Dim x={1280} y={663} t="6000" w={39} />
    <Dim x={1039} y={698} t="19000" w={49} />
    <Dim x={1037} y={687} t="19000" s={6} />
    <Dim x={788} y={684} t="6000" s={6} />
    <Dim x={665} y={542} t="10 ⌀ rQ" s={7} />
    <Dim x={890} y={535} t="20 ⌀ rQ" s={7} />
    <Dim x={690} y={679} t="10 ⌀ rQ" s={7} />
    <Dim x={914} y={673} t="20 ⌀ rQ" s={7} />
    <Dim x={1177} y={662} t="20 ⌀ rQ" s={7} />
    <Dim x={1400} y={652} t="10 ⌀ rQ" s={7} />
    <Dim x={1137} y={523} t="B X&Y: C8@170" s={7} r={177} />
    <Dim x={1133} y={532} t="DJ ⌀02,300/300" s={7} r={177} />
    <Dim x={1362} y={513} t="B X&Y: C8@170" s={7} r={177} />
    <Dim x={1358} y={522} t="DJ ⌀01,300/300" s={7} r={177} />
    <path d="M677,533 L681,544 M905,524 L907,536 M703,671 L705,684 M927,665 L929,677 M1194,652 L1196,664 M1417,643 L1418,652 M1169,515 L1173,534 M1389,501 L1394,522" stroke="#fff" strokeWidth="1" />
    <Dim x={568.5} y={578} t="800" s={7} r={97} />
    <Dim x={592} y={577} t="800" s={7} r={97} />
    <Dim x={1459} y={543} t="800" s={7} r={97} />
    <Dim x={1484} y={542} t="800" s={7} r={97} />
    {[[565, 493], [570, 519], [590, 632], [595, 658], [785, 483], [789, 511], [809, 623], [1049, 473], [1053, 501], [1073, 613], [1276, 465], [1280, 491], [1300, 605]].map((p, i) => (
      <Dim key={i} x={p[0]} y={p[1]} t="900" s={8} r={97} c="#13e013" />
    ))}
    {[[640, 607], [695, 605], [863, 597], [920, 595], [1126, 586], [1186, 584], [1354, 579], [1408, 577]].map((p, i) => (
      <Dim key={i} x={p[0]} y={p[1]} t="1525" s={7} r={177} c="#13e013" />
    ))}
    <path d="M1350,466 L1371,487 M1371,466 L1350,487" stroke="#fff" strokeWidth="1.6" />
    <g fill="none" stroke="#a9a9a9" strokeWidth="1.1">
      <circle cx="1027" cy="596" r="391" />
      <circle cx="635" cy="595" r="30" />
      <circle cx="1418" cy="595" r="30" />
      <circle cx="1027" cy="204" r="30" />
      <circle cx="1027" cy="988" r="30" />
    </g>
    <path d="M469,950 L469,925" stroke="#2a62ff" strokeWidth="2.5" />
    <path d="M464,928 L469,916 L474,928Z" fill="#2a62ff" />
    <path d="M469,950 L448,950" stroke="#f02020" strokeWidth="3" />
    <path d="M450,945 L440,950 L450,955Z" fill="#f02020" />
    <path d="M469,950 L470,965" stroke="#18c018" strokeWidth="2.5" />
    <path d="M466,963 L470,973 L474,963Z" fill="#18c018" />
    <rect x="466" y="946" width="6" height="8" fill="#dde" />
    <text x="429" y="957" fontSize="14" fontFamily="Liberation Sans" fill="#f02020">X</text>
    <text x="464" y="926" fontSize="13" fontFamily="Liberation Sans" fill="#2a62ff">Z</text>
  </CanvasSvg>
);

const VI: React.FC<{ children: React.ReactNode }> = ({ children }) => (
  <svg width="24" height="24" viewBox="0 0 24 24" fill="none" stroke={S} strokeWidth="1.2">{children}</svg>
);
const VCaret = styled.span`
  width: 0; height: 0; border-left: 3px solid transparent; border-right: 3px solid transparent; border-top: 4px solid #555;
`;

const NAV_TOP = ['现浇板(B)', '螺旋板(B)', '坡道(PD)', '柱帽(V)', '板洞(N)', '板受力筋(S)', '板负筋(F)', '楼层板带(H)', '板加腋(B)'];
const NAV_SUB = ['大开挖土方(W)', '基槽土方(C)', '基坑土方(K)', '大开挖灰土回填', '基槽灰土回填', '基坑灰土回填', '房心回填'];
const PROPS: [string, string, boolean, boolean][] = [
  ['名称', 'DKW-1', true, false], ['土壤类别', '二类干土', true, true], ['深度(mm)', '(1250)', false, true], ['放坡系数', '0', false, true],
  ['工作面宽(mm)', '0', false, true], ['挖土方式', '机械', true, true], ['顶标高(m)', '层底标高+1.25', false, true], ['底标高(m)', '垫层底标高', false, true], ['备注', '', false, true],
];
type DR = { t: string; g?: boolean; last?: boolean; on?: boolean };
const DISP: DR[] = [
  { t: '预制墙', on: true }, { t: '预制梁', on: true }, { t: '叠合板(整厚)', on: true }, { t: '叠合板(预制底...', on: true }, { t: '板缝' }, { t: '叠合板受力筋' }, { t: '叠合板负筋', on: true }, { t: '预制楼梯', last: true },
  { t: '空心楼盖', g: true }, { t: '空心楼盖板' }, { t: '空心楼盖柱帽' }, { t: '主肋梁' }, { t: '成孔芯模' }, { t: '次肋梁' }, { t: '次肋梁下部筋' }, { t: '次肋梁支座筋' }, { t: '空挡' }, { t: '空心楼盖板受...', last: true },
  { t: '楼梯', g: true }, { t: '楼梯' }, { t: '直形梯段' }, { t: '螺旋梯段' }, { t: '楼梯井', last: true },
  { t: '装修', g: true }, { t: '房间' }, { t: '楼地面' }, { t: '踢脚' }, { t: '墙裙' }, { t: '墙面' }, { t: '天棚' }, { t: '吊顶' }, { t: '独立柱装修' }, { t: '单梁装修', last: true },
];

const TaskIcons: React.ReactNode[] = [
  <svg key="snap" width="26" height="26" viewBox="0 0 26 26"><rect x="1" y="9" width="14" height="15" rx="1.5" fill="#6b6b6b" /><rect x="9" y="2" width="15" height="16" rx="1.5" fill="#f2f2f2" /><rect x="6" y="6" width="13" height="14" rx="1" fill="#bdbdbd" /></svg>,
  <svg key="edge" width="26" height="26" viewBox="0 0 26 26"><defs><linearGradient id="eg" x1="0" y1="0" x2="1" y2="1"><stop offset="0" stopColor="#49d27b" /><stop offset="1" stopColor="#1479d4" /></linearGradient></defs><circle cx="13" cy="13" r="12" fill="url(#eg)" /><path d="M7 16c0-5 5-7 9-5 3 1 3 5-1 5-2 0-3-1-2-2-3 0-4 5 1 7-4 1-7-2-7-5Z" fill="#0b3f88" /></svg>,
  <svg key="files" width="26" height="26" viewBox="0 0 26 26"><path d="M1 3h10l2 3h11v18H1Z" fill="#d9a71c" /><rect x="1" y="7" width="24" height="17" fill="#fbd34f" /><rect x="6" y="16" width="14" height="8" rx="1" fill="#1c7fd0" /></svg>,
  <svg key="store" width="26" height="26" viewBox="0 0 26 26"><path d="M9 6V2h8v4" fill="none" stroke="#2cb4f0" strokeWidth="2" /><rect x="3" y="6" width="20" height="19" rx="2" fill="#f2f2f2" /><rect x="8" y="10" width="4.5" height="4.5" fill="#e74c2c" /><rect x="13.5" y="10" width="4.5" height="4.5" fill="#6cbf2f" /><rect x="8" y="15.5" width="4.5" height="4.5" fill="#1d8fe0" /><rect x="13.5" y="15.5" width="4.5" height="4.5" fill="#f2b81c" /></svg>,
  <svg key="mail" width="26" height="26" viewBox="0 0 26 26"><path d="M13 1L24 11H2Z" fill="#1565b5" /><rect x="2" y="11" width="22" height="14" fill="#3fb4ea" /><path d="M2 11l11 9 11-9" fill="#fff" opacity=".85" /></svg>,
  <svg key="sw" width="26" height="30" viewBox="0 0 26 30"><rect width="24" height="28" x="1" y="1" rx="5" fill="#2e84f0" /><path d="M8 12l6-6 3 3-6 6 6 4-5 6-4-3 3-3-5-3Z" fill="#fff" opacity=".9" /></svg>,
  <svg key="doc2" width="26" height="30" viewBox="0 0 26 30"><rect width="24" height="28" x="1" y="1" rx="5" fill="#1ca0e8" /><rect x="6" y="5" width="14" height="20" fill="#d9f0fb" /><path d="M8 9h10M8 12h10M8 15h6" stroke="#1c78c8" /><circle cx="16" cy="20" r="3.5" fill="#1c78c8" /></svg>,
  <svg key="t" width="26" height="30" viewBox="0 0 26 30"><rect width="24" height="28" x="1" y="1" rx="5" fill="#1f6ff0" /><path d="M6 12c4-2 8-3 14-3l-1 4h-3l-1 10h-4l1-10Z" fill="#fff" /></svg>,
  <svg key="cad" width="26" height="30" viewBox="0 0 26 30"><rect width="24" height="26" x="1" y="2" fill="#8a8a8a" /><rect width="20" height="20" x="3" y="6" fill="#1d5fa8" /><text x="13" y="20" fontSize="9" fontFamily="Liberation Sans" fontWeight="700" fill="#fff" textAnchor="middle">CAD</text></svg>,
  <svg key="wx" width="28" height="28" viewBox="0 0 28 28"><ellipse cx="11" cy="11" rx="10" ry="9.5" fill="#2fc24a" /><circle cx="7.5" cy="9.5" r="1.3" fill="#153" /><circle cx="13.5" cy="9.5" r="1.3" fill="#153" /><ellipse cx="19" cy="18.5" rx="8.5" ry="8" fill="#ededed" /><circle cx="16.5" cy="17" r="1" fill="#666" /><circle cx="21.5" cy="17" r="1" fill="#666" /></svg>,
];

export default function App() {
  return (
    <>
      <Global />
      <Shell>
        <TitleBar>
          <Qat>
            <QatCell $w={24}><Logo /></QatCell>
            <QatCell $w={44} $pl={10}><Ic n="upload" s={20} /></QatCell>
            <QatCell $w={34}><Ic n="doc" s={20} /></QatCell>
            <QatCell $w={34}><Ic n="folder" s={20} /></QatCell>
            <QatCell $w={35}><Ic n="save" s={20} /></QatCell>
            <QatCell $w={26}><Ic n="undo" s={20} /></QatCell>
            <QatCell $w={4}><QatCaret /></QatCell>
            <QatCell $w={28} $pl={6}><Ic n="redo" s={20} /></QatCell>
            <QatCell $w={8}><QatCaret $off /></QatCell>
            <QatCell $w={36}><Ic n="sum" s={20} /></QatCell>
            <QatCell $w={34}><Ic n="calc" s={20} /></QatCell>
            <QatCell $w={32}><Ic n="grid" s={20} /></QatCell>
            <QatCell $w={36}><Ic n="gridOff" s={20} off /></QatCell>
            <QatCell $w={34}><Ic n="penOff" s={20} off /></QatCell>
            <QatCell $w={30}><Ic n="film" s={20} off /></QatCell>
            <QatCell $w={40}><Ic n="frame" s={20} /></QatCell>
            <QatCell $w={14}><QatCaret /></QatCell>
          </Qat>
          <TitleText>广联达BIM土建计量平台 GTJ2025 - [C:\Users\李德龙\Desktop\配电房.GTJ]</TitleText>
          <WinControls>
            <Minus size={14} color="#555" />
            <svg width="14" height="14" viewBox="0 0 14 14" fill="none" stroke="#555"><rect x="2.5" y="4.5" width="7" height="7" /><path d="M4.5 4.5v-2h7v7h-2" /></svg>
            <X size={14} color="#555" />
          </WinControls>
        </TitleBar>
        <TabBar>
          {['开始', '工程设置', '建模', '工程量', '视图', '工具', '云应用', '施工算量', '算量协作', '智能提量'].map(t => (
            <MenuTab key={t} $active={t === '建模'}>{t}</MenuTab>
          ))}
          <TabRight>
            <HelpSearch>土建计量GTJ中，对齐/单对齐/多对齐可以对齐哪些类型<Search size={11} color="#aaa" style={{ flex: 'none' }} /></HelpSearch>
            <svg width="16" height="17" viewBox="0 0 16 17" style={{ margin: '0 0 0 7px', flex: 'none' }}><rect width="16" height="17" fill="#a9d0fa" /><circle cx="8" cy="7" r="4" fill="#fff" /><path d="M2 17c0-5 12-5 12 0Z" fill="#e7f2fe" /></svg>
            <UserName>盈盈一笑的你</UserName>
            <HelpIcons>
              <Headphones size={15} color="#555" strokeWidth={1.2} />
              <svg width="16" height="16" viewBox="0 0 16 16" fill="none" stroke="#555"><path d="M2 8a6 5.5 0 0 1 9-4.5M14 7a6 5.5 0 0 1-9 6L2 15l.8-3" /><circle cx="13" cy="3" r="2.3" stroke={B} /><path d="M5 8h1M8 8h1M11 8h1" /></svg>
              <QMark>?<Caret style={{ marginLeft: 2, borderTopColor: '#555' }} /></QMark>
              <Shirt size={15} color="#555" strokeWidth={1.2} />
              <ChevronUp size={15} color="#555" strokeWidth={1.2} />
            </HelpIcons>
          </TabRight>
        </TabBar>
        <Ribbon>
          <RGroup $w={233}>
            <RBody>
              <RCol $w={55}>
                <Large>
                  <LargeIconBox $h={36}>
                    <svg width="26" height="32" viewBox="0 0 26 32"><path d="M3 2v28l20-13Z" fill={L} stroke="#1d7cf2" strokeWidth="2" strokeLinejoin="round" /></svg>
                  </LargeIconBox>
                  <LargeText>选择</LargeText>
                </Large>
              </RCol>
              <RCol $w={98}>
                <Row n="pick" t="拾取构件" /><Row n="batch" t="批量选择" /><Row n="attr" t="按属性选择" caret />
              </RCol>
              <RCol $w={78}>
                <Row n="find" t="查找图元" /><Row n="filter" t="过滤图元" off />
              </RCol>
            </RBody>
            <RLabel>选择</RLabel>
          </RGroup>
          <RGroup $w={194}>
            <RBody $pl={10}>
              <RCol $w={79}>
                <Row n="scale" t="设置比例" /><Row n="replace" t="查找替换" /><Row n="restore" t="还原CAD" />
              </RCol>
              <RCol $w={104}>
                <Row n="recog" t="识别楼层表" /><Row n="cad" t="CAD识别选项" />
              </RCol>
            </RBody>
            <RLabel>图纸操作<Caret /></RLabel>
          </RGroup>
          <RGroup $w={275}>
            <RBody $pl={10}>
              <RCol $w={66}>
                <Row n="define" t="定义" /><Row n="cloud" t="云检查" /><Row n="lock" t="锁定" caret />
              </RCol>
              <RCol $w={111}>
                <Row n="copyf" t="复制到其它层" caret /><Row n="autoalign" t="自动平齐顶板" off caret /><Row n="store" t="图元存盘" caret />
              </RCol>
              <RCol $w={85}>
                <Row n="twoaxis" t="两点辅轴" caret /><Row n="lenDim" t="长度标注" caret /><Row n="convert" t="转换图元" />
              </RCol>
            </RBody>
            <RLabel>通用操作<Caret /></RLabel>
          </RGroup>
          <RGroup $w={238}>
            <RBody $pl={10}>
              <RCol $w={53}>
                <Row n="del" t="删除" /><Row n="copy" t="复制" /><Row n="move" t="移动" />
              </RCol>
              <RCol $w={55}>
                <Row n="rotate" t="旋转" /><Row n="mirror" t="镜像" /><Row n="extend" t="延伸" off />
              </RCol>
              <RCol $w={62}>
                <Row n="trim" t="修剪" off /><Row n="align" t="对齐" caret /><Row n="brk" t="打断" off />
              </RCol>
              <RCol $w={50}>
                <Row n="offset" t="偏移" /><Row n="merge" t="合并" /><Row n="split" t="分割" />
              </RCol>
            </RBody>
            <RLabel>修改<Caret /></RLabel>
          </RGroup>
          <RGroup $w={69}>
            <RBody>
              <RCol $w={33}>
                <RItem $center><Ic n="point" /></RItem>
                <RItem $center><Ic n="line" /></RItem>
                <RItem $center><Ic n="arc" /><Caret /></RItem>
              </RCol>
              <RCol $w={33}>
                <RItem $center><Ic n="circle" /></RItem>
                <RItem $center><Ic n="rect" /></RItem>
              </RCol>
            </RBody>
            <RLabel>绘图</RLabel>
          </RGroup>
          <RGroup $w={78}>
            <RBody>
              <RCol $w={60}>
                <Large>
                  <LargeIconBox $h={36}>
                    <svg width="32" height="32" viewBox="0 0 32 32" fill="none" stroke={S} strokeWidth="1.6"><path d="M5 6h24M5 17h24M5 28h13M10 1v28M21 1v16" /><circle cx="4" cy="6" r="2" fill="#fff" /><circle cx="4" cy="17" r="2" fill="#fff" /><circle cx="4" cy="28" r="2" fill="#fff" /><rect x="17" y="19" width="12" height="12" rx="2" stroke={B} strokeWidth="2" strokeDasharray="4 3" /></svg>
                  </LargeIconBox>
                  <LargeText>智能布置</LargeText>
                  <Caret style={{ marginTop: 6, marginLeft: 0 }} />
                </Large>
              </RCol>
            </RBody>
            <RLabel>智能布置</RLabel>
          </RGroup>
          <RGroup $w={195}>
            <RBody $pl={9}>
              <RCol $w={87}>
                <Row n="tri" t="三点变斜" caret /><Row n="elev" t="查改标高" /><Row n="slope" t="设置放坡" />
              </RCol>
              <RCol $w={90}>
                <Row n="work" t="设置工作面" />
              </RCol>
            </RBody>
            <RLabel>大开挖土方二次编辑</RLabel>
          </RGroup>
        </Ribbon>
        <SelectBar>
          {['基础层', '土方', '大开挖土方', 'DKW-1', '分层1'].map(t => (
            <SelectBox key={t}>{t}<Caret style={{ borderTopColor: '#666' }} /></SelectBox>
          ))}
        </SelectBar>
        <Main>
          <NavPanel>
            <PanelHead>
              <Grip $w={25}><GripDots /></Grip>
              <HeadTitle>导航栏</HeadTitle>
              <HeadClose><X size={13} /></HeadClose>
            </PanelHead>
            {NAV_TOP.map(t => <NavItem key={t}>{t}</NavItem>)}
            {['装配式', '空心楼盖', '楼梯', '装修', '基坑支护'].map(t => <NavCatRow key={t} t={t} />)}
            <NavCatRow t="土方" active />
            {NAV_SUB.map((t, i) => <NavItem key={t} $active={i === 0}>{t}</NavItem>)}
            <NavCatRow t="基础" />
            <NavCatRow t="其它" />
            <NavScroll />
          </NavPanel>
          <MidCol>
            <Panel $h={376}>
              <PanelHead>
                <Grip $w={23}><GripDots /></Grip>
                <HeadTab $active>构件列表</HeadTab>
                <HeadTab>图纸管理</HeadTab>
                <HeadClose><X size={13} /></HeadClose>
              </PanelHead>
              <ToolRow>
                <ToolBtn><Ic n="doc" s={19} /></ToolBtn>
                <ToolBtn $w={12} $ml={1}><Caret style={{ margin: 0 }} /></ToolBtn>
                <ToolBtn $ml={9}><Ic n="copy" s={18} /></ToolBtn>
                <ToolBtn $ml={9}><Ic n="del" s={18} /></ToolBtn>
                <ToolBtn $ml={9}>
                  <svg width="18" height="18" viewBox="0 0 18 18" fill="none" stroke={S}><path d="M2.5 16V7M4.5 16V5.5" /><path d="M2.5 16h8M4.5 14h8" /><rect x="7" y="2" width="9.5" height="9.5" rx="1.5" fill={L} stroke={B} /></svg>
                </ToolBtn>
                <ToolBtn $ml={9}><Ic n="store" s={18} /></ToolBtn>
                <ToolBtn $w={26} $ml={23} $border>
                  <svg width="10" height="8" viewBox="0 0 10 8" fill="#555"><path d="M1 1l3 3-3 3ZM5 1l3 3-3 3Z" /></svg>
                </ToolBtn>
              </ToolRow>
              <CompSearch>搜索构件...<Search size={11} color="#aaa" /></CompSearch>
              <CompItem>{'DKW-1  <1>'}</CompItem>
            </Panel>
            <Panel>
              <PanelHead>
                <Grip $w={23}><GripDots /></Grip>
                <HeadTab $active>属性列表</HeadTab>
                <HeadTab>图层管理</HeadTab>
                <HeadClose><X size={13} /></HeadClose>
              </PanelHead>
              <PropGrid $head>
                <PropHeadCell>属性名称</PropHeadCell>
                <PropHeadCell $bold>属性值</PropHeadCell>
                <PropHeadCell>附加</PropHeadCell>
              </PropGrid>
              <PropGroup><Tri $open />基础属性</PropGroup>
              {PROPS.map(([n, v, link, dot]) => (
                <PropRow key={n}>
                  <PropName $link={link}>{n}</PropName>
                  <PropInput>{v}</PropInput>
                  {dot ? <PropDot /> : <span />}
                </PropRow>
              ))}
              <PropGroup $mt={1}><Tri />土建业务属性</PropGroup>
              <PropGroup><Tri />显示样式</PropGroup>
              <Annotation />
            </Panel>
          </MidCol>
          <CanvasWrap>
            <Drawing />
            <SideHandle $side="l"><ChevronLeft size={12} /></SideHandle>
            <SideHandle $side="r"><ChevronRight size={12} /></SideHandle>
            <ViewBar>
              <ViewIcon $h={28}><VI><ellipse cx="12" cy="12" rx="9" ry="9" /><ellipse cx="12" cy="12" rx="10.5" ry="4.5" stroke={B} transform="rotate(-30 12 12)" /></VI></ViewIcon>
              <ViewIcon $h={28}><svg width="20" height="20" viewBox="0 0 20 20" fill="none" stroke={S}><rect x="1.5" y="1.5" width="17" height="17" rx="1" /><text x="4" y="15" fontSize="7.5" fontWeight="700" fontFamily="Liberation Sans" fill={B} stroke="none">2D</text></svg></ViewIcon>
              <ViewIcon $h={28}><VI><path d="M3 7h15v15H3ZM3 7l4-4h15v15l-4 4M18 7l4-4" stroke={S} /><path d="M3 7l4-4h15l-4 4Z" stroke={B} /></VI></ViewIcon>
              <ViewIcon $h={10}><VCaret /></ViewIcon>
              <ViewIcon $h={30}><VI><path d="M3 7h15v15H3Z" fill={L} stroke={B} /><path d="M3 7l4-4h15v15l-4 4M18 7l4-4" stroke={B} /></VI></ViewIcon>
              <ViewIcon $h={10}><VCaret /></ViewIcon>
              <ViewIcon $h={29}><VI><path d="M3 7V3h4M17 3h4v4M21 17v4h-4M7 21H3v-4" /></VI></ViewIcon>
              <ViewIcon $h={29}><VI><rect x="2.5" y="2.5" width="19" height="19" rx="2" strokeDasharray="2.5 1.8" /><path d="M12 6l5 3v6l-5 3-5-3V9ZM7 9l5 3 5-3M12 12v6" stroke={B} /></VI></ViewIcon>
              <ViewRule />
              <ViewIcon $h={26}><VI><path d="M12 21H3V3h18v11" /><path d="M6 7h12M6 11h8M6 15h5M14 7v0" strokeDasharray="3 1" /><ellipse cx="18" cy="18.5" rx="4.5" ry="3" stroke={B} /><circle cx="18" cy="18.5" r="1.2" fill={B} stroke="none" /></VI></ViewIcon>
            </ViewBar>
          </CanvasWrap>
          <RightPanel>
            <PanelHead>
              <Grip $w={25}><GripDots /></Grip>
              <HeadTitle>显示设置</HeadTitle>
              <HeadClose $edge><X size={13} /></HeadClose>
            </PanelHead>
            <RightTabs>
              <RightTab $active>图元显示</RightTab>
              <RightTab>楼层显示</RightTab>
            </RightTabs>
            <DisplayTable>
              <DRow $head>
                <DHeadCell>图层构件</DHeadCell>
                <DHeadCell $on>显示图元</DHeadCell>
                <DHeadCell>显示名称</DHeadCell>
              </DRow>
              {DISP.map((r, i) => (
                <DRow key={i}>
                  <DIndent />
                  <DTree>
                    {r.g ? <Expander /> : <Connector $last={r.last} />}
                    {r.t}
                  </DTree>
                  <DCell><Check $on={r.on}>{r.on && <Check2 />}</Check></DCell>
                  <DCell><Check /></DCell>
                </DRow>
              ))}
            </DisplayTable>
            <RestoreRow><RestoreBtn>恢复默认设置</RestoreBtn></RestoreRow>
          </RightPanel>
        </Main>
        <StatusBar>
          <StatItem $w={90}>层高：  1.35</StatItem>
          <StatItem $w={140}>标高：  -1.4~-0.05</StatItem>
          <StatItem $w={110}>选中图元：  0</StatItem>
          <StatItem $w={107}>隐藏图元：  0</StatItem>
          <SBtn $w={26} $ml={1}><svg width="14" height="14" viewBox="0 0 14 14" fill="none" stroke="#444"><path d="M3 1v11h10M3 8h4v4" /></svg></SBtn>
          <SBtn $w={35} $on><svg width="14" height="16" viewBox="0 0 14 16" fill="none" stroke="#555"><rect x="1.5" y="2" width="11" height="12" rx="2" /></svg><Caret style={{ margin: 0, borderTopColor: '#555' }} /></SBtn>
          <SBtn $w={24} $ml={6}><svg width="16" height="16" viewBox="0 0 16 16" fill="none" stroke="#999"><path d="M3 1l10 14M13 1L3 15" /></svg></SBtn>
          <SBtn $w={36} $ml={7}><svg width="16" height="16" viewBox="0 0 16 16" fill="none" stroke="#555"><path d="M2 13L12 3M2 14h11" /></svg><Caret style={{ margin: 0, borderTopColor: '#555' }} /></SBtn>
          <SBtn $w={36}><svg width="16" height="16" viewBox="0 0 16 16" fill="none" stroke="#555"><path d="M2 3h5M4.5 1v5" /><rect x="6" y="9" width="8" height="4" fill="#555" /></svg><Caret style={{ margin: 0, borderTopColor: '#555' }} /></SBtn>
          <SBtn $w={25}><svg width="16" height="16" viewBox="0 0 16 16" fill="none" stroke="#555"><rect x="3" y="1.5" width="10" height="13" /><rect x="5" y="4" width="6" height="6" fill="#444" /><path d="M11 9l3 3-2 .5-.5 2Z" fill="#333" /></svg></SBtn>
          <SBtn $w={25}><svg width="16" height="16" viewBox="0 0 16 16" fill="none" stroke="#777"><path d="M3 14C3 8 6 3 11 2" /><path d="M10 7l4 3-4 3Z" fill="#777" stroke="none" /></svg></SBtn>
          <StatusHint>
            <svg width="16" height="16" viewBox="0 0 16 16" fill="none" stroke="#444"><path d="M2 14L14 2M9 2h5v5M2 9v5h5" /></svg>
            <span>按鼠标左键指定第一个角点，或拾取构件图元</span>
          </StatusHint>
          <StatusDone>
            <svg width="14" height="14" viewBox="0 0 14 14"><circle cx="7" cy="7" r="7" fill="#6cbf1a" /><path d="M3.5 7l2.5 2.5 4.5-5" fill="none" stroke="#fff" strokeWidth="1.5" /></svg>
            实时计算已完成
          </StatusDone>
        </StatusBar>
        <Taskbar>
          <Weather>
            <WeatherIcon>
              <svg width="20" height="28" viewBox="0 0 20 28"><defs><linearGradient id="wg" x1="0" y1="0" x2="0" y2="1"><stop offset="0" stopColor="#f7b21a" /><stop offset="1" stopColor="#ee6f0f" /></linearGradient></defs><ellipse cx="10" cy="16" rx="10" ry="12" fill="url(#wg)" /></svg>
              <WBadge>1</WBadge>
            </WeatherIcon>
            <WeatherText>26°C<br />晴朗</WeatherText>
          </Weather>
          <TaskCell>
            <svg width="23" height="23" viewBox="0 0 23 23"><rect width="11" height="11" fill="#29a8ea" /><rect x="12" width="11" height="11" fill="#3cc0f5" /><rect y="12" width="11" height="11" fill="#1b8fdc" /><rect x="12" y="12" width="11" height="11" fill="#29a8ea" /></svg>
          </TaskCell>
          <WinSearch>
            <Search size={15} color="#222" style={{ flex: 'none' }} />
            搜索
            <svg width="46" height="26" viewBox="0 0 46 26" style={{ marginLeft: 'auto', flex: 'none' }}>
              <path d="M6 25V8M40 25V8" stroke="#7a5a2a" strokeWidth="1.5" />
              <path d="M6 8L1 6M6 8l5-2M6 8L3 3M6 8l4-5M40 8l-5-2M40 8l5-2M40 8l-3-5M40 8l4-5" stroke="#5d9c2a" strokeWidth="1.8" />
              <path d="M6 12c8 12 26 12 34 0-4 14-30 14-34 0Z" fill="#1e88d0" />
            </svg>
          </WinSearch>
          {TaskIcons.map((ic, i) => (
            <TaskCell key={i} $on={i === 9}>
              {ic}
              {(i === 2 || i >= 5) && <TaskDot $on={i === 9} />}
            </TaskCell>
          ))}
          <Tray>
            <TrayCell $w={32}><ChevronUp size={15} strokeWidth={2} /></TrayCell>
            <TrayCell $w={32}>英</TrayCell>
            <TrayCell $w={24} $ml={8}><Wifi size={16} /></TrayCell>
            <TrayCell $w={22}><VolumeX size={15} /></TrayCell>
            <TrayCell $w={26}><svg width="16" height="16" viewBox="0 0 16 16" fill="none" stroke="#fff"><rect x="4" y="5" width="10" height="8" fill="#fff" /><path d="M2 11V4l3-2" /></svg></TrayCell>
            <Clock>10:11<br />2024/5/31</Clock>
            <Bell size={15} strokeWidth={1.4} />
          </Tray>
        </Taskbar>
      </Shell>
    </>
  );
}
